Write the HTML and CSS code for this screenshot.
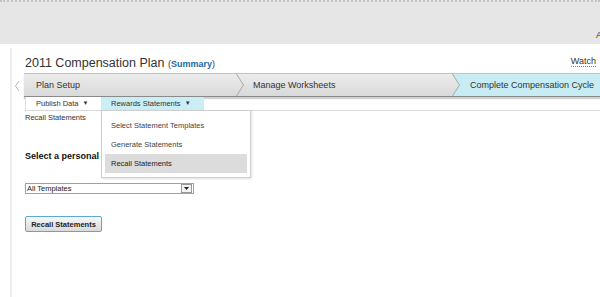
FILE: index.html
```html
<!DOCTYPE html>
<html lang="en">
<head>
    <meta charset="UTF-8">
    <title>2011 Compensation Plan</title>
    <link rel="stylesheet" href="styles.css">
</head>
<body>
    <div class="topbar">
        <span class="user">A</span>
    </div>
    <div class="page">
        <div class="header">
            <h1>2011 Compensation Plan <span class="paren">(<a href="#" class="summary">Summary</a>)</span></h1>
            <a href="#" class="watch">Watch</a>
        </div>

        <div class="process-row">
            <svg class="prev" width="12" height="24" viewBox="0 0 12 24">
                <polyline points="7,8 3.5,13 7,18" fill="none" stroke="#b8b8b8" stroke-width="1"/>
            </svg>
            <div class="process">
                <div class="step">Plan Setup</div>
                <svg class="sep" width="10" height="22" viewBox="0 0 10 22">
                    <polyline points="0.5,0 7.5,11 0.5,22" fill="none" stroke="#a8a8a8" stroke-width="1"/>
                </svg>
                <div class="step">Manage Worksheets</div>
                <svg class="sep" width="10" height="22" viewBox="0 0 10 22">
                    <polygon points="0,0 10,0 10,22 0,22 7.5,11" fill="#c8ecf4"/>
                    <polyline points="0.5,0 7.5,11 0.5,22" fill="none" stroke="#a8a8a8" stroke-width="1"/>
                </svg>
                <div class="step step-active">Complete Compensation Cycle</div>
            </div>
        </div>

        <div class="tabs">
            <div class="tab">Publish Data <span class="caret">&#9660;</span></div>
            <div class="tab tab-active">
                Rewards Statements <span class="caret">&#9660;</span>
                <ul class="menu">
                    <li>Select Statement Templates</li>
                    <li>Generate Statements</li>
                    <li class="current">Recall Statements</li>
                </ul>
            </div>
        </div>

        <div class="content">
            <p class="crumb">Recall Statements</p>
            <h2>Select a personal</h2>
            <div class="select">
                <span>All Templates</span>
                <span class="select-btn">
                    <svg width="5" height="3" viewBox="0 0 5 3"><polygon points="0,0 5,0 2.5,3" fill="#222"/></svg>
                </span>
            </div>
            <button class="btn">Recall Statements</button>
        </div>
    </div>
</body>
</html>
```

FILE: styles.css
```css
body {
    margin: 0;
    font-family: 'Liberation Sans', Arial, sans-serif;
    color: #333;
    background: #fff;
    overflow: hidden;
    height: 297px;
}

.topbar {
    height: 42px;
    background: #e6e6e6;
    border-top: 2px dotted #c4c4c4;
    display: flex;
    justify-content: flex-end;
    align-items: flex-end;
}

.user {
    font-size: 9px;
    color: #333;
    margin-right: -2px;
    margin-bottom: 4px;
}

.page {
    margin-left: 10px;
    border-left: 2px solid #ededed;
    margin-top: 4px;
    height: 260px;
}

.header {
    display: flex;
    justify-content: space-between;
    align-items: flex-end;
    padding-left: 13px;
    padding-right: 4px;
    height: 24px;
}

h1 {
    font-size: 12.5px;
    font-weight: normal;
    margin: 0;
    line-height: 15px;
    color: #333;
}

.paren {
    font-size: 9px;
}

.summary {
    color: #1b6aa5;
    font-weight: bold;
    text-decoration: none;
}

.watch {
    font-size: 9px;
    color: #333;
    text-decoration: none;
    border-bottom: 1px dotted #4a8fd0;
    margin-bottom: 5px;
}

.process-row {
    display: flex;
    align-items: center;
    margin-top: 1px;
}

.prev {
    flex: none;
    display: block;
}

.process {
    flex: 1;
    display: flex;
    height: 22px;
    border-top: 1px solid #c2c2c2;
    border-bottom: 1px solid #8a8a8a;
    background: linear-gradient(#ececec, #d9d9d9);
    box-shadow: 0 2px 1px #d0d0d0;
    overflow: hidden;
}

.step {
    font-size: 9px;
    line-height: 22px;
    color: #333;
    white-space: nowrap;
}

.step:first-child {
    width: 200px;
    padding-left: 12px;
}

.step:nth-child(3) {
    width: 199px;
    padding-left: 7px;
}

.sep {
    flex: none;
    display: block;
}

.step-active {
    flex: 1;
    padding-left: 8px;
    background: #c8ecf4;
}

.tabs {
    display: flex;
    margin-left: 13px;
    border-bottom: 1px solid #d8d8d8;
    height: 13px;
}

.tab {
    position: relative;
    font-size: 7.5px;
    line-height: 13px;
    color: #333;
    padding: 0 10px;
    background: #fff;
    border-left: 1px solid #e0e0e0;
}

.tab:first-child {
    width: 55px;
}

.tab-active {
    width: 83px;
    background: #cbeef6;
    border-left: none;
}

.caret {
    font-size: 6px;
    vertical-align: 1px;
    margin-left: 2px;
}

.menu {
    position: absolute;
    top: 13px;
    left: 0;
    width: 142px;
    margin: 0;
    padding: 5px 3px 4px;
    list-style: none;
    background: #fff;
    border: 1px solid #cfcfcf;
    box-shadow: 1px 1px 2px rgba(0, 0, 0, 0.12);
    z-index: 2;
}

.menu li {
    height: 19px;
    line-height: 19px;
    padding-left: 6px;
    font-size: 7.5px;
    color: #444;
}

.menu li.current {
    background: #dcdcdc;
    color: #222;
}

.content {
    padding-left: 13px;
}

.crumb {
    margin: 2px 0 0;
    font-size: 7.5px;
    line-height: 10px;
    color: #333;
}

h2 {
    margin: 27px 0 0;
    font-size: 9px;
    line-height: 12px;
    color: #111;
}

.select {
    margin-top: 21px;
    width: 166px;
    height: 9px;
    border: 1px solid #a0a0a0;
    display: flex;
    justify-content: space-between;
    align-items: center;
    font-size: 7.5px;
    color: #222;
    padding-left: 1px;
}

.select-btn {
    width: 9px;
    height: 7px;
    border: 1px solid #999;
    margin-right: 1px;
    background: #f2f2f2;
    display: flex;
    align-items: center;
    justify-content: center;
}

.btn {
    display: block;
    margin-top: 22px;
    width: 77px;
    height: 16px;
    padding: 0;
    font-family: 'Liberation Sans', Arial, sans-serif;
    font-size: 7.5px;
    font-weight: bold;
    color: #222;
    border: 1px solid #5aa7d6;
    border-radius: 2px;
    background: linear-gradient(#f7f7f7, #dadada);
}
```
